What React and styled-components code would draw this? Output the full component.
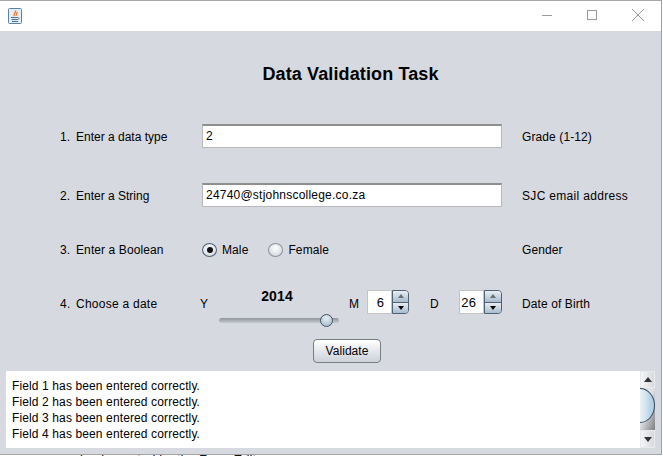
import React from "react";
import styled, { createGlobalStyle } from "styled-components";

const Global = createGlobalStyle`
  html, body { margin: 0; padding: 0; background: #fff; width: 663px; height: 456px; overflow: hidden; }
  * { box-sizing: border-box; }
`;

const Frame = styled.div`
  width: 663px; height: 456px; display: flex; flex-direction: column; overflow: hidden;
  font-family: "Liberation Sans", Arial, sans-serif; font-size: 12px; letter-spacing: 0.1px; color: #000;
`;
const Window = styled.div`
  width: 662px; height: 455px; flex: none; display: flex; flex-direction: column;
  border-top: 1px solid #a8a8a8; border-right: 1px solid #a0a0a0; border-bottom: 1px solid #a4a4a4;
`;
const TitleBar = styled.div`
  height: 30px; flex: none; background: #fff; display: flex; align-items: center; padding-left: 8px;
`;
const AppIcon = styled.svg` width: 14px; height: 16px; display: block; `;
const WinButtons = styled.div` margin-left: auto; display: flex; `;
const WinButton = styled.svg` width: 46px; height: 30px; display: block; `;
const Body = styled.div`
  flex: 1; min-height: 0; background: #d6d9df; display: flex; flex-direction: column;
`;
const Title = styled.div`
  font-size: 18px; font-weight: 700; letter-spacing: 0.12px; text-align: center; height: 20px; line-height: 20px; margin-top: 33px; padding-left: 40px;
`;
const Row = styled.div`
  display: grid; grid-template-columns: 16px 126px 300px 20px 1fr; align-items: center; padding-left: 60px;
  height: ${p => p.$h}px; margin-top: ${p => p.$mt}px;
`;
const Label = styled.div`
  white-space: nowrap; letter-spacing: ${p => p.$ls || 0}px; padding-top: ${p => p.$pt || 0}px;
`;
const Field = styled.div`
  height: 24px; background: #fff; border: 1px solid #b8b8b8; border-top: 2px solid #8e8e8e; padding-left: 3px; line-height: 21px; letter-spacing: 0.22px;
`;
const Radios = styled.div` display: flex; align-items: center; `;
const Radio = styled.span`
  width: 15px; height: 14px; border-radius: 50%; border: 1px solid ${p => (p.$on ? "#4e6274" : "#8d9298")};
  background: radial-gradient(circle at 50% 35%, #fff, #cfd6df 90%);
  display: flex; align-items: center; justify-content: center; margin: 0 5px 0 ${p => p.$ml}px;
`;
const Dot = styled.span` width: 6px; height: 6px; border-radius: 50%; background: #111; `;
const DateRow = styled.div`
  display: flex; align-items: flex-start; height: 40px; margin-top: 31px; padding-left: 60px;
`;
const DateText = styled.div`
  flex: none; white-space: nowrap; line-height: 14px; margin-top: 9px; letter-spacing: ${p => p.$ls ?? 0.1}px;
  width: ${p => p.$w}px; margin-left: ${p => p.$ml || 0}px;
`;
const NumMark = styled.span` display: inline-block; width: 16px; `;
const SliderBox = styled.div` flex: none; width: 120px; display: flex; flex-direction: column; align-items: center; `;
const Year = styled.div` font-weight: 700; font-size: 14px; line-height: 16px; height: 16px; padding-right: 4px; `;
const Track = styled.div`
  width: 120px; height: 5px; margin-top: 14px; border-radius: 3px; background: linear-gradient(#8f959d, #c6cad0); position: relative;
`;
const Thumb = styled.span`
  position: absolute; left: 101px; top: -4px; width: 13px; height: 13px; border-radius: 50%;
  border: 1px solid #3e5468; background: radial-gradient(circle at 50% 30%, #e6edf4, #a0b5c8);
`;
const Spinner = styled.div` flex: none; display: flex; height: 24px; margin-top: 2px; width: ${p => p.$w}px; `;
const SpinVal = styled.div`
  width: 25px; background: #fff; border: 1px solid #c4c4c4; text-align: right; padding-right: 7px; line-height: 24px; font-size: 13px;
`;
const SpinBtns = styled.div`
  flex: 1; display: flex; flex-direction: column; border: 1px solid #4e6274; border-radius: 0 4px 4px 0; overflow: hidden;
`;
const SpinBtn = styled.div`
  flex: 1; display: flex; align-items: center; justify-content: center; background: linear-gradient(#e8edf2, #a9bccd);
  & + & { border-top: 1px solid #4e6274; }
`;
const Arrow = styled.span`
  width: 0; height: 0; border-left: ${p => p.$s}px solid transparent; border-right: ${p => p.$s}px solid transparent;
  ${p => (p.$up ? `border-bottom: ${p.$s + 1}px solid ${p.$c};` : `border-top: ${p.$s + 1}px solid ${p.$c};`)}
`;
const ButtonRow = styled.div` display: flex; margin-top: 11px; padding-left: 313px; `;
const Button = styled.div`
  width: 68px; height: 24px; border: 1px solid #787d84; border-radius: 4px;
  background: linear-gradient(#fff, #e2e5ea 55%, #cdd2d9); text-align: center; line-height: 23px; letter-spacing: 0.05px;
`;
const LogRow = styled.div` display: flex; margin: 8px 0 0 6px; height: 77px; `;
const Log = styled.div` width: 634px; background: #fff; padding: 7px 6px 0; line-height: 16px; letter-spacing: 0.12px; `;
const Scroll = styled.div` width: 15px; display: flex; flex-direction: column; overflow: hidden; `;
const ScrollBtn = styled.div`
  height: ${p => p.$h}px; flex: none; display: flex; align-items: center; justify-content: center;
  background: linear-gradient(90deg, #f4f5f7, #d6d9de); border: 1px solid #e8eaed;
`;
const ScrollTrack = styled.div`
  flex: 1; position: relative; overflow: hidden; background: linear-gradient(110deg, #dfe1e5 45%, #7d7d7d 100%);
`;
const ScrollThumb = styled.div`
  position: absolute; left: -15px; top: 0; width: 30px; height: 35px; border-radius: 50%; border: 1px solid #2f4a60;
  background: linear-gradient(90deg, #eaf1f7 50%, #dbe7f2 65%, #b5d0e6 90%);
`;
const BehindClip = styled.div` height: 1px; overflow: hidden; flex: none; padding-left: 80px; `;
const Behind = styled.div` white-space: nowrap; font-size: 13px; line-height: 15px; margin-top: -3px; color: #111; `;

const Item = ({ n, label, value, hint, mt, hintLs }) => (
  <Row $h={24} $mt={mt}>
    <Label $pt={1} $ls={0.1}>{n}.</Label>
    <Label $pt={1}>{label}</Label>
    <Field>{value}</Field>
    <span />
    <Label $pt={1} $ls={hintLs}>{hint}</Label>
  </Row>
);

const Spin = ({ v, w }) => (
  <Spinner $w={w}>
    <SpinVal>{v}</SpinVal>
    <SpinBtns>
      <SpinBtn><Arrow $up $s={3} $c="#6a6f75" /></SpinBtn>
      <SpinBtn><Arrow $s={3} $c="#000" /></SpinBtn>
    </SpinBtns>
  </Spinner>
);

export default function App() {
  return (
    <>
      <Global />
      <Frame>
        <Window>
          <TitleBar>
            <AppIcon viewBox="0 0 14 16">
              <rect x="0.5" y="0.5" width="13" height="15" rx="1" fill="#e6edf3" stroke="#5b82a5" />
              <path d="M7.5 2.5c1 2-2.5 3-1.2 5.5M9 4c.3 1.5-1.2 2.2-.7 3.8" stroke="#e8772e" fill="none" strokeWidth="1.3" />
              <path d="M3 9.5h6.5M3.5 11.5h6M4 13.5h6M9.5 9.5c2 0 2 2-.5 2" stroke="#4f6f90" fill="none" />
            </AppIcon>
            <WinButtons>
              <WinButton viewBox="0 0 46 30"><path d="M19 14.5h10" stroke="#9a9a9a" /></WinButton>
              <WinButton viewBox="0 0 46 30"><rect x="18.5" y="9.5" width="9" height="9" fill="none" stroke="#9a9a9a" /></WinButton>
              <WinButton viewBox="0 0 46 30"><path d="M17 8l12 12M29 8L17 20" stroke="#9a9a9a" /></WinButton>
            </WinButtons>
          </TitleBar>
          <Body>
            <Title>Data Validation Task</Title>
            <Item n="1" label="Enter a data type" value="2" hint="Grade (1-12)" hintLs={0.1} mt={40} />
            <Item n="2" label="Enter a String" value="24740@stjohnscollege.co.za" hint="SJC email address" hintLs={0.32} mt={35} />
            <Row $h={14} $mt={36}>
              <Label $ls={0.1}>3.</Label>
              <Label $ls={0.1}>Enter a Boolean</Label>
              <Radios>
                <Radio $on $ml={0}><Dot /></Radio>Male
                <Radio $ml={20} />Female
              </Radios>
              <span />
              <Label $ls={0.1}>Gender</Label>
            </Row>
            <DateRow>
              <DateText $w={140} $ls={0.25}><NumMark>4.</NumMark>Choose a date</DateText>
              <DateText $w={19}>Y</DateText>
              <SliderBox>
                <Year>2014</Year>
                <Track><Thumb /></Track>
              </SliderBox>
              <DateText $w={18} $ml={10}>M</DateText>
              <Spin v="6" w={42} />
              <DateText $w={29} $ml={21}>D</DateText>
              <Spin v="26" w={43} />
              <DateText $w={110} $ml={20}>Date of Birth</DateText>
            </DateRow>
            <ButtonRow><Button>Validate</Button></ButtonRow>
            <LogRow>
              <Log>
                <div>Field 1 has been entered correctly.</div>
                <div>Field 2 has been entered correctly.</div>
                <div>Field 3 has been entered correctly.</div>
                <div>Field 4 has been entered correctly.</div>
              </Log>
              <Scroll>
                <ScrollBtn $h={17}><Arrow $up $s={4} $c="#333" /></ScrollBtn>
                <ScrollTrack><ScrollThumb /></ScrollTrack>
                <ScrollBtn $h={18}><Arrow $s={4} $c="#333" /></ScrollBtn>
              </Scroll>
            </LogRow>
          </Body>
        </Window>
        <BehindClip><Behind>implemented by the Form Editor</Behind></BehindClip>
      </Frame>
    </>
  );
}
